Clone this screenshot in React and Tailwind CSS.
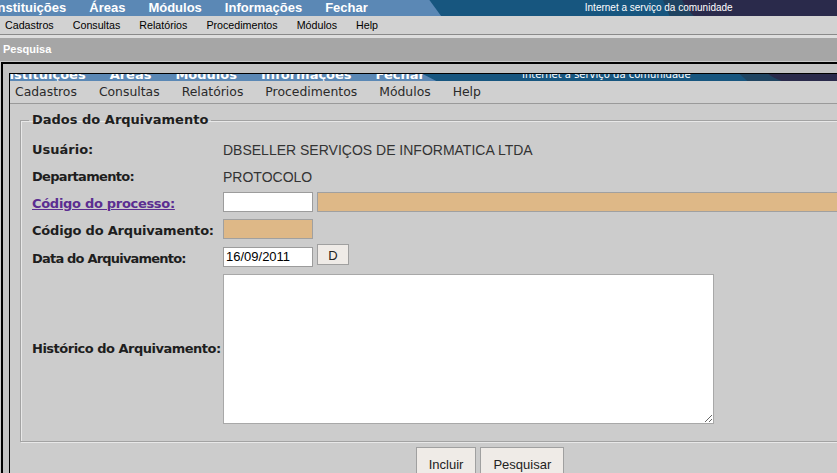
import React from "react";

const outerMenu = ["Cadastros", "Consultas", "Relatórios", "Procedimentos", "Módulos", "Help"];
const topItems = ["Instituições", "Áreas", "Módulos", "Informações", "Fechar"];

// arte de fundo da faixa azul (diagonais do banner)
const BannerArt = ({ cut, dark, end }) => (
  <svg className="absolute inset-0 h-full w-full" preserveAspectRatio="none" viewBox="0 0 1000 16">
    <rect x="0" y="0" width="1000" height="16" fill="#5b88b5" />
    <polygon points={`${cut},0 1000,0 1000,16 ${cut + 14},16`} fill="#17567f" />
    <polygon points={`${dark},0 1000,0 1000,16 ${dark + 8},16`} fill="#1f4461" />
    <path d={`M${end} 0 L1000 0 L1000 16 L${end + 14} 16 Q${end + 4} 8 ${end} 0 Z`} fill="#2a2a4b" />
  </svg>
);

const Label = ({ children, className = "" }) => (
  <div
    className={`w-[191px] shrink-0 whitespace-nowrap font-['DejaVu_Sans',sans-serif] text-[13px] font-bold leading-[16px] text-[#1e1e1e] ${className}`}
  >
    {children}
  </div>
);

export default function App() {
  return (
    <div className="h-[473px] w-[837px] overflow-hidden bg-[#cccccc] font-['Liberation_Sans',Arial,sans-serif]">
      {/* faixa azul superior */}
      <div className="relative h-[16px] overflow-hidden">
        <BannerArt cut={513} dark={792} end={815} />
        <div className="relative flex h-full items-center">
          <div className="ml-[-6px] flex gap-[23px] text-[13px] font-bold leading-[16px] text-white">
            {topItems.map((t) => (
              <span key={t}>{t}</span>
            ))}
          </div>
          <span className="ml-[217px] text-[10px] leading-[16px] text-white">
            Internet a serviço da comunidade
          </span>
        </div>
      </div>

      {/* menu externo */}
      <div className="flex h-[19px] items-center gap-[19px] border-b border-[#8a8a8a] bg-[#d2d2d2] pl-[5px] text-[10.7px] leading-[14px] text-black">
        {outerMenu.map((t) => (
          <span key={t}>{t}</span>
        ))}
      </div>
      <div className="h-[3px] bg-[#dedede]" />

      {/* barra Pesquisa */}
      <div className="flex h-[23px] items-center bg-[#a6a6a6] pl-[3px] text-[11px] font-bold text-white">
        Pesquisa
      </div>
      <div className="h-[1px] bg-[#c8c8c8]" />

      {/* moldura da janela */}
      <div className="ml-[1px] border-l-2 border-t-2 border-black bg-[#c3c3c3] pl-[6px] pt-[9px]">
        <div className="w-[961px] border-l border-t border-black bg-[#cccccc]">
          {/* banner interno cortado */}
          <div className="relative h-[7px] overflow-hidden">
            <BannerArt cut={430} dark={760} end={790} />
            <div className="relative mt-[-7px] flex items-start">
              <div className="ml-[-10px] flex gap-[24px] font-['DejaVu_Sans',sans-serif] text-[13px] font-bold leading-[16px] text-white">
                {topItems.map((t) => (
                  <span key={t}>{t}</span>
                ))}
              </div>
              <span className="ml-[97px] font-['DejaVu_Sans',sans-serif] text-[10px] leading-[16px] text-white">
                Internet a serviço da comunidade
              </span>
            </div>
          </div>

          {/* menu interno */}
          <div className="flex h-[23px] items-center gap-[22px] border-b border-[#9a9a9a] bg-[#d0d0d0] pl-[5px] font-['DejaVu_Sans',sans-serif] text-[12.4px] leading-[16px] text-[#2a2a2a]">
            {outerMenu.map((t) => (
              <span key={t}>{t}</span>
            ))}
          </div>

          {/* formulário */}
          <fieldset className="mx-[10px] mt-[8px] border border-[#a3a3a3] pb-[17px] pl-[8px] pt-[9px] shadow-[inset_1px_1px_0_#e8e8e8,1px_1px_0_#e8e8e8]">
            <legend className="px-[3px] font-['DejaVu_Sans',sans-serif] text-[13px] font-bold leading-[16px] text-[#1e1e1e]">
              Dados do Arquivamento
            </legend>
            <div className="pl-[3px]">
              <div className="flex h-[25px] items-center">
                <Label>Usuário:</Label>
                <span className="text-[14px] leading-[16px] text-[#333]">DBSELLER SERVIÇOS DE INFORMATICA LTDA</span>
              </div>
              <div className="flex h-[26px] items-center">
                <Label className="pt-[4px] tracking-[-0.7px]">Departamento:</Label>
                <span className="pt-[4px] text-[14px] leading-[16px] text-[#333]">PROTOCOLO</span>
              </div>
              <div className="flex h-[27px] items-center">
                <Label className="pt-[4px] tracking-[-0.3px] text-[#5b2d91] underline">Código do processo:</Label>
                <div className="h-[20px] w-[90px] border border-[#9c9c9c] bg-white" />
                <div className="ml-[4px] h-[20px] w-[620px] border border-[#a0a0a0] bg-[#deb887]" />
              </div>
              <div className="flex h-[27px] items-center">
                <Label className="pt-[4px] tracking-[-0.2px]">Código do Arquivamento:</Label>
                <div className="h-[20px] w-[90px] border border-[#a0a0a0] bg-[#deb887]" />
              </div>
              <div className="flex h-[28px] items-start">
                <div className="mt-[9px]">
                  <Label className="tracking-[-0.8px]">Data do Arquivamento:</Label>
                </div>
                <div className="mt-[5px] flex h-[20px] w-[90px] items-center border border-[#9c9c9c] bg-white pl-[2px] text-[13px] text-black">
                  16/09/2011
                </div>
                <div className="ml-[4px] mt-[2px] flex h-[21px] w-[32px] justify-center border border-[#a0a0a0] bg-[#efebe7] pt-[4px] text-[13px] leading-[14px] text-[#222]">
                  D
                </div>
              </div>
              <div className="flex items-center pt-[4px]">
                <Label className="tracking-[-0.5px]">Histórico do Arquivamento:</Label>
                <textarea
                  readOnly
                  className="block h-[150px] w-[491px] border border-[#a8a8a8] bg-white outline-none"
                />
              </div>
            </div>
          </fieldset>

          {/* botões */}
          <div className="mt-[5px] flex justify-center gap-[4px]">
            <div className="h-[40px] border border-[#a0a0a0] bg-[#efebe7] px-[12px] pt-[9px] text-[13px] leading-[16px] text-[#222]">
              Incluir
            </div>
            <div className="h-[40px] border border-[#a0a0a0] bg-[#efebe7] px-[12px] pt-[9px] text-[13px] leading-[16px] text-[#222]">
              Pesquisar
            </div>
          </div>
        </div>
      </div>
    </div>
  );
}
